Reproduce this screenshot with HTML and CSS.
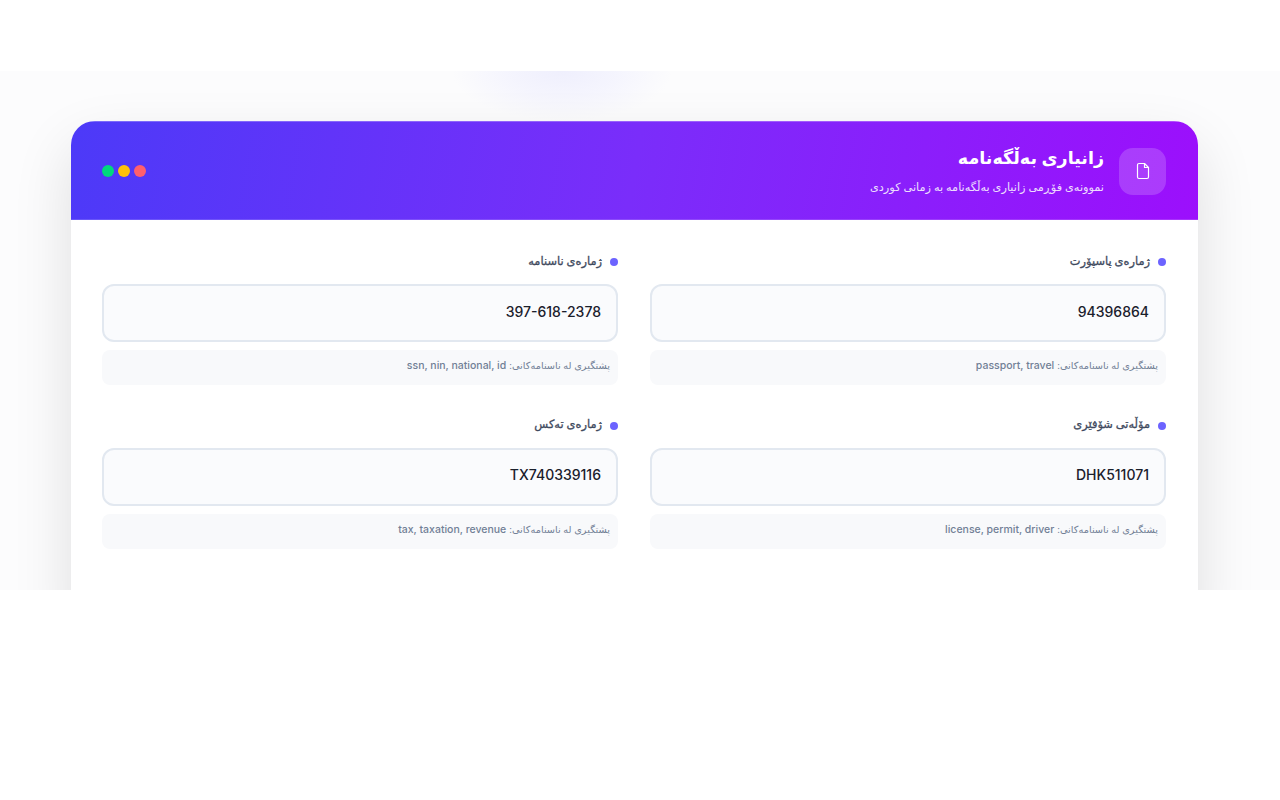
FILE: index.html
```html
<!DOCTYPE html>
<html lang="ckb" dir="rtl">
<head>
    <meta charset="UTF-8">
    <meta name="viewport" content="width=device-width, initial-scale=1.0">
    <title>زانیاری بەڵگەنامە</title>
    <link rel="stylesheet" href="styles.css">
</head>
<body>
    <section class="stage">
        <div class="card">
            <header class="card-header">
                <div class="header-main">
                    <div class="header-icon">
                        <svg width="16" height="18" viewBox="0 0 16 18" fill="none" stroke="#fff" stroke-width="1.2" stroke-linejoin="round" stroke-linecap="round">
                            <path d="M9.5 1.5H4a1.5 1.5 0 0 0-1.5 1.5v12A1.5 1.5 0 0 0 4 16.5h8a1.5 1.5 0 0 0 1.5-1.5V5.5z"/>
                            <path d="M9.5 1.5v4h4"/>
                        </svg>
                    </div>
                    <div class="header-text">
                        <h1>زانیاری بەڵگەنامە</h1>
                        <p>نموونەی فۆڕمی زانیاری بەڵگەنامە بە زمانی کوردی</p>
                    </div>
                </div>
                <div class="dots">
                    <span class="dot dot-red"></span>
                    <span class="dot dot-yellow"></span>
                    <span class="dot dot-green"></span>
                </div>
            </header>

            <div class="form-grid">
                <div class="field">
                    <div class="field-label"><span class="bullet"></span>ژمارەی پاسپۆرت</div>
                    <div class="field-value">94396864</div>
                    <div class="field-hint">پشتگیری لە ناسنامەکانی: <span class="hint-keys">passport, travel</span></div>
                </div>
                <div class="field">
                    <div class="field-label"><span class="bullet"></span>ژمارەی ناسنامە</div>
                    <div class="field-value">397-618-2378</div>
                    <div class="field-hint">پشتگیری لە ناسنامەکانی: <span class="hint-keys">ssn, nin, national, id</span></div>
                </div>
                <div class="field">
                    <div class="field-label"><span class="bullet"></span>مۆڵەتی شۆفێری</div>
                    <div class="field-value">DHK511071</div>
                    <div class="field-hint">پشتگیری لە ناسنامەکانی: <span class="hint-keys">license, permit, driver</span></div>
                </div>
                <div class="field">
                    <div class="field-label"><span class="bullet"></span>ژمارەی تەکس</div>
                    <div class="field-value">TX740339116</div>
                    <div class="field-hint">پشتگیری لە ناسنامەکانی: <span class="hint-keys">tax, taxation, revenue</span></div>
                </div>
            </div>
        </div>
    </section>
</body>
</html>
```

FILE: styles.css
```css
body {
    margin: 0;
    background: #fff;
    font-family: "Noto Sans", "DejaVu Sans", sans-serif;
}

.stage {
    margin-top: 71px;
    height: 519px;
    overflow: hidden;
    box-sizing: border-box;
    padding: 50px 82px 0 71px;
    background:
        radial-gradient(ellipse 110px 50px at 562px 0, #efeffd 0%, rgba(240, 240, 254, 0.6) 50%, rgba(240, 240, 254, 0) 100%),
        #fcfcfd;
}

.card {
    background: #fff;
    border-radius: 24px;
    overflow: hidden;
    box-shadow: 0 25px 60px rgba(0, 0, 0, 0.12);
}

.card-header {
    height: 99px;
    box-sizing: border-box;
    padding: 1px 32px 0 31px;
    display: flex;
    align-items: center;
    justify-content: space-between;
    color: #fff;
    background: linear-gradient(100deg, #4c3af8 0%, #7a2dfa 50%, #9c0ffc 100%);
    box-shadow: inset 0 1px 0 rgba(255, 255, 255, 0.25), inset 0 -1px 0 rgba(255, 255, 255, 0.15);
}

.header-main {
    display: flex;
    align-items: center;
    gap: 15px;
}

.header-icon {
    width: 47px;
    height: 47px;
    border-radius: 14px;
    background: rgba(255, 255, 255, 0.18);
    display: flex;
    align-items: center;
    justify-content: center;
}

.header-text {
    padding-bottom: 2px;
}

.header-text h1 {
    margin: 0 0 10px;
    font-size: 17.5px;
    line-height: 24px;
    font-weight: 700;
}

.header-text p {
    margin: 0;
    font-size: 11.3px;
    line-height: 16px;
    opacity: 0.85;
}

.dots {
    display: flex;
    gap: 4px;
}

.dot {
    width: 12px;
    height: 12px;
    border-radius: 50%;
}

.dot-red { background: #ff5f6d; }
.dot-yellow { background: #ffc107; }
.dot-green { background: #00d97e; }

.form-grid {
    display: grid;
    grid-template-columns: 1fr 1fr;
    column-gap: 32px;
    row-gap: 30.6px;
    padding: 32px 32px 80px 31px;
}

.field-label {
    display: flex;
    align-items: center;
    gap: 8px;
    height: 18px;
    margin-bottom: 14px;
    padding-bottom: 2px;
    box-sizing: border-box;
    font-size: 11.4px;
    font-weight: 400;
    -webkit-text-stroke: 0.3px #3f4a5e;
    color: #3f4a5e;
}

.bullet {
    width: 8px;
    height: 8px;
    border-radius: 50%;
    background: #6c63ff;
    margin-top: 4px;
}

.field-value {
    height: 58px;
    box-sizing: border-box;
    padding: 0 15px 4px;
    display: flex;
    align-items: center;
    border: 2px solid #e2e8f0;
    border-radius: 12px;
    background: #fafbfd;
    font-family: "Inter", sans-serif;
    font-size: 14px;
    font-weight: 500;
    color: #1a202c;
}

.field-hint {
    margin-top: 8px;
    height: 35px;
    box-sizing: border-box;
    padding: 0 8px 4px;
    display: flex;
    align-items: center;
    gap: 3px;
    border-radius: 8px;
    background: #f8f9fb;
    font-size: 9.8px;
    color: #718096;
}

.hint-keys {
    font-family: "Inter", sans-serif;
    font-size: 10.5px;
    font-weight: 500;
}
```
